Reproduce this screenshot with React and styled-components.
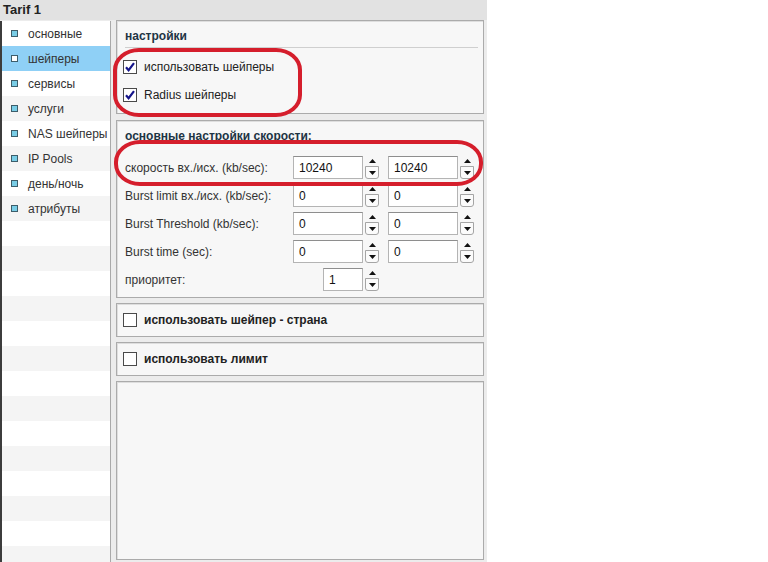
import styled, { createGlobalStyle } from "styled-components";

const GlobalStyle = createGlobalStyle`
  html, body {
    margin: 0;
    padding: 0;
    background: #ffffff;
    font-family: "Liberation Sans", Arial, sans-serif;
    font-size: 12px;
    color: #333;
  }
`;

const menu = [
  "основные",
  "шейперы",
  "сервисы",
  "услуги",
  "NAS шейперы",
  "IP Pools",
  "день/ночь",
  "атрибуты",
];

const speedRows = [
  { label: "скорость вх./исх. (kb/sec):", values: ["10240", "10240"] },
  { label: "Burst limit вх./исх. (kb/sec):", values: ["0", "0"] },
  { label: "Burst Threshold (kb/sec):", values: ["0", "0"] },
  { label: "Burst time (sec):", values: ["0", "0"] },
];

function Spinner() {
  return (
    <SpinBox>
      <SpinUp>
        <svg width="7" height="4" viewBox="0 0 7 4">
          <path d="M0 4 L3.5 0 L7 4 Z" fill="#111" />
        </svg>
      </SpinUp>
      <SpinDown>
        <svg width="7" height="4" viewBox="0 0 7 4">
          <path d="M0 0 L3.5 4 L7 0 Z" fill="#111" />
        </svg>
      </SpinDown>
    </SpinBox>
  );
}

function NumberField({ value, small }) {
  return (
    <Field>
      <Input small={small}>{value}</Input>
      <Spinner />
    </Field>
  );
}

function Check({ checked }) {
  return (
    <CheckBox>
      {checked && (
        <svg width="12" height="12" viewBox="0 0 12 12">
          <path
            d="M2 6.2 L4.6 9.2 L10 2.2"
            fill="none"
            stroke="#14148a"
            strokeWidth="2.2"
          />
        </svg>
      )}
    </CheckBox>
  );
}

export default function App() {
  const rows = Array.from({ length: 22 }, (_, i) => menu[i] || null);
  return (
    <>
      <GlobalStyle />
      <Page>
        <Header>Tarif 1</Header>
        <Body>
          <Sidebar>
            {rows.map((item, i) => (
              <MenuItem key={i} odd={i % 2 === 1} active={i === 1}>
                {item && (
                  <>
                    <Bullet active={i === 1} />
                    {item}
                  </>
                )}
              </MenuItem>
            ))}
          </Sidebar>

          <Main>
            <Section first>
              <Title underline>настройки</Title>
              <CheckRow>
                <Check checked />
                использовать шейперы
              </CheckRow>
              <CheckRow>
                <Check checked />
                Radius шейперы
              </CheckRow>
            </Section>

            <Section>
              <Title>основные настройки скорости:</Title>
              <SpeedGrid>
                {speedRows.map((r) => (
                  <FormRow key={r.label}>
                    <Label>{r.label}</Label>
                    <NumberField value={r.values[0]} />
                    <NumberField value={r.values[1]} />
                  </FormRow>
                ))}
                <FormRow>
                  <Label>приоритет:</Label>
                  <RightCell>
                    <NumberField value="1" small />
                  </RightCell>
                </FormRow>
              </SpeedGrid>
            </Section>

            <Section compact>
              <CheckRow bold>
                <Check />
                использовать шейпер - страна
              </CheckRow>
            </Section>

            <Section compact>
              <CheckRow bold>
                <Check />
                использовать лимит
              </CheckRow>
            </Section>

            <Section grow />
          </Main>
        </Body>

        <Mark style={{ left: 113, top: 48, width: 189, height: 69 }} />
        <Mark style={{ left: 114, top: 140, width: 369, height: 46 }} />
      </Page>
    </>
  );
}

const Page = styled.div`
  position: relative;
  width: 487px;
  height: 562px;
  display: flex;
  flex-direction: column;
  background: #ececec;
  overflow: hidden;
`;

const Header = styled.div`
  height: 20px;
  line-height: 20px;
  padding-left: 3px;
  background: #e2e2e2;
  font-weight: bold;
  font-size: 13px;
  color: #222;
`;

const Body = styled.div`
  flex: 1;
  display: flex;
  min-height: 0;
`;

const Sidebar = styled.div`
  flex: none;
  width: 108px;
  border-left: 2px solid #3c3c3c;
  border-right: 1px solid #a9a9a9;
  margin-top: 1px;
  background: #fff;
  overflow: hidden;
`;

const MenuItem = styled.div`
  height: 25px;
  display: flex;
  align-items: center;
  gap: 10px;
  padding-left: 9px;
  font-size: 12px;
  white-space: nowrap;
  color: #333;
  background: ${(p) => (p.active ? "#8fd0f6" : p.odd ? "#f4f4f4" : "#ffffff")};
`;

const Bullet = styled.span`
  flex: none;
  width: 5px;
  height: 5px;
  border: 1px solid #3d5d6a;
  background: ${(p) => (p.active ? "#ffffff" : "#79cde6")};
`;

const Main = styled.div`
  flex: 1;
  display: flex;
  flex-direction: column;
  gap: 5px;
  padding: 0 3px 2px 5px;
`;

const Section = styled.div`
  background: #f7f7f7;
  border: 1px solid #ababab;
  box-shadow: inset 1px 1px 0 #dedede;
  padding: ${(p) => (p.compact ? "0 6px" : "7px 5px 0 6px")};
  height: ${(p) => (p.first ? "94px" : p.compact ? "34px" : "auto")};
  box-sizing: border-box;
  margin-bottom: ${(p) => (p.first ? "1px" : "0")};
  display: flex;
  flex-direction: column;
  justify-content: ${(p) => (p.compact ? "center" : "flex-start")};
  flex: ${(p) => (p.grow ? 1 : "none")};
`;

const Title = styled.div`
  margin-left: 2px;
  font-weight: bold;
  font-size: 12px;
  line-height: 16px;
  color: #1e3444;
  padding-bottom: ${(p) => (p.underline ? "3px" : "0")};
  border-bottom: ${(p) => (p.underline ? "1px solid #cfcfcf" : "none")};
  margin-bottom: ${(p) => (p.underline ? "5px" : "12px")};
`;

const CheckRow = styled.div`
  height: 28px;
  display: flex;
  align-items: center;
  gap: 7px;
  font-size: 12px;
  font-weight: ${(p) => (p.bold ? "bold" : "normal")};
  color: #222;
`;

const CheckBox = styled.span`
  width: 12px;
  height: 12px;
  border: 1px solid #4a4a4a;
  background: #fff;
  display: flex;
  align-items: center;
  justify-content: center;
`;

const SpeedGrid = styled.div`
  display: flex;
  flex-direction: column;
  gap: 5px;
  padding-bottom: 6px;
`;

const FormRow = styled.div`
  display: grid;
  grid-template-columns: 159px 86px 86px;
  column-gap: 9px;
  align-items: center;
  height: 23px;
  margin-left: 2px;
`;

const Label = styled.span`
  font-size: 12px;
  color: #333;
  white-space: nowrap;
`;

const RightCell = styled.div`
  display: flex;
  justify-content: flex-end;
`;

const Field = styled.div`
  display: flex;
  align-items: stretch;
  gap: 2px;
  height: 23px;
`;

const Input = styled.div`
  width: ${(p) => (p.small ? "40px" : "70px")};
  box-sizing: border-box;
  background: #fff;
  border: 1px solid #b4b4b4;
  border-top-color: #8e8e8e;
  padding: 0 5px;
  display: flex;
  align-items: center;
  font-size: 12px;
  color: #111;
`;

const SpinBox = styled.div`
  width: 14px;
  display: flex;
  flex-direction: column;
`;

const SpinUp = styled.div`
  height: 10px;
  display: flex;
  align-items: center;
  justify-content: center;
`;

const SpinDown = styled.div`
  flex: 1;
  border: 1px solid #a5a5a5;
  border-radius: 0 0 3px 3px;
  background: #fbfbfb;
  display: flex;
  align-items: center;
  justify-content: center;
`;

const Mark = styled.div`
  position: absolute;
  box-sizing: border-box;
  border: 4px solid #d51e2c;
  border-radius: 26px / 22px;
  pointer-events: none;
`;
